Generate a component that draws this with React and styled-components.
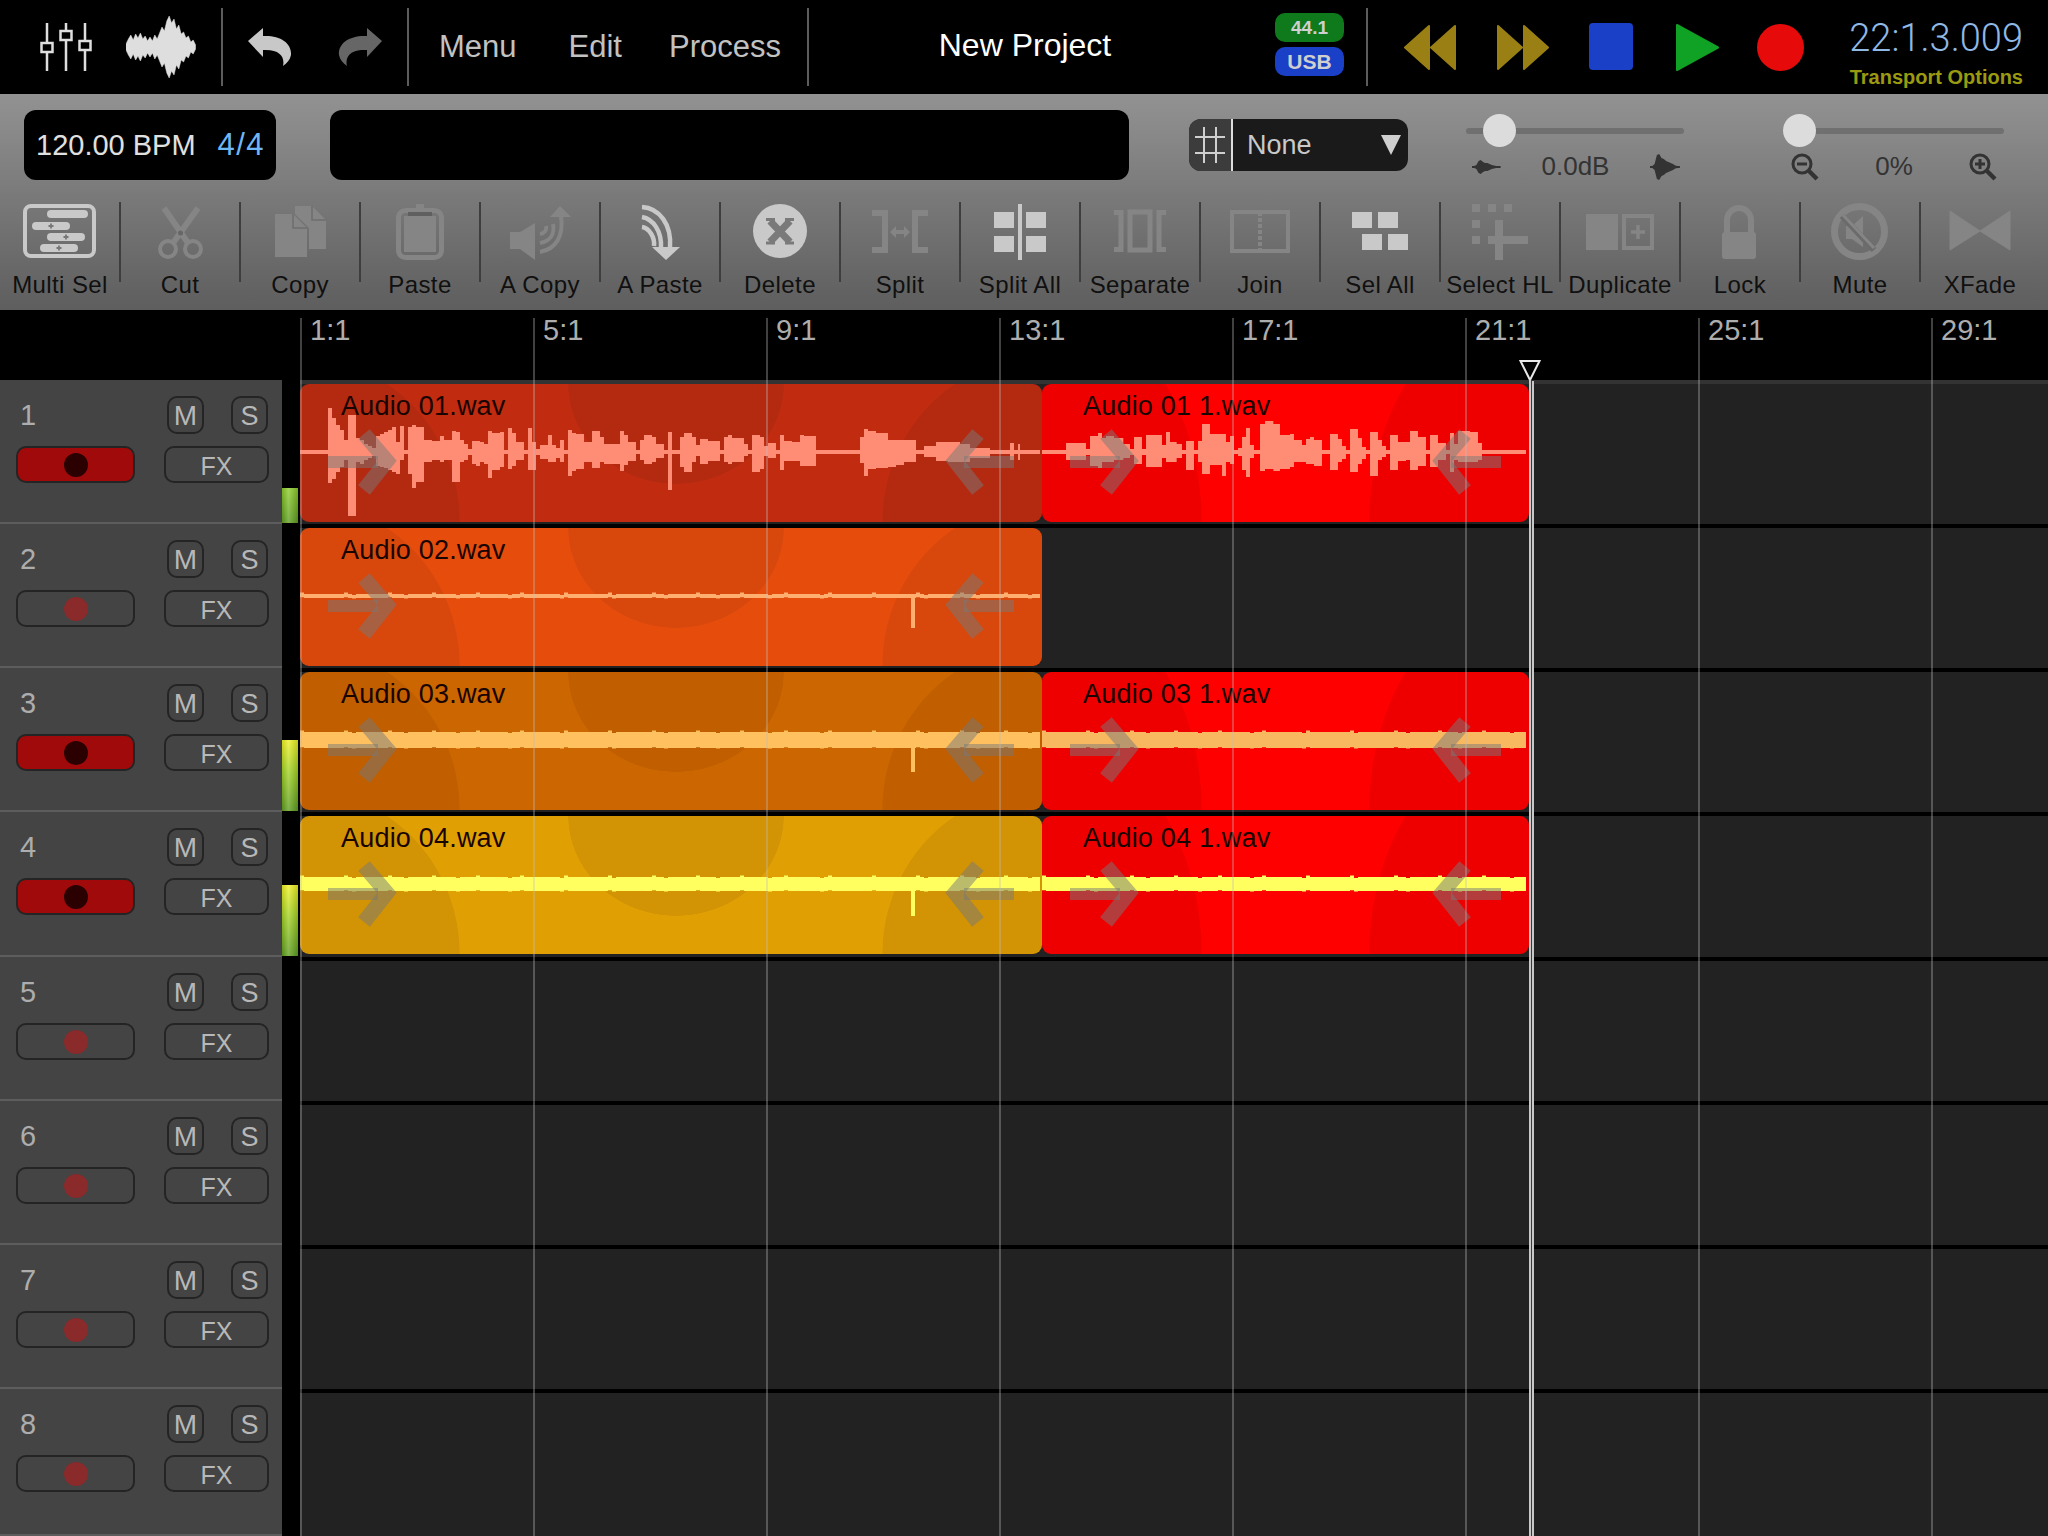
import React from 'react'
import styled, { createGlobalStyle } from 'styled-components'

const GlobalStyle = createGlobalStyle`
  html, body {
    margin: 0;
    width: 2048px;
    height: 1536px;
    overflow: hidden;
    background: #000;
    font-family: "Liberation Sans", Arial, sans-serif;
  }
`

const ON = '#c9c9c9'
const OFF = '#858585'
const BEAT = 233

const wave1 = [
  [84, 2, 2], [12, 44, 31], [12, 34, 27], [12, 27, 20], [12, 22, 15], [12, 12, 8], [24, 37, 64], [12, 14, 10], [12, 12, 12],
  [12, 8, 8], [12, 6, 6], [12, 4, 4], [12, 16, 14], [12, 18, 15], [12, 20, 16], [12, 22, 18], [12, 25, 20], [12, 10, 22],
  [12, 26, 8], [12, 2, 2], [12, 25, 22], [12, 27, 36], [24, 25, 30], [24, 12, 10], [24, 11, 8], [12, 16, 10], [24, 12, 8],
  [12, 21, 30], [12, 20, 30], [12, 12, 10], [12, 8, 8], [12, 3, 3], [12, 11, 12], [12, 11, 14], [12, 10, 10], [12, 8, 12],
  [12, 21, 26], [24, 19, 18], [12, 20, 15], [12, 2, 2], [12, 24, 17], [12, 19, 14], [24, 10, 8], [12, 2, 2], [12, 24, 18],
  [12, 10, 18], [12, 3, 3], [24, 7, 7], [12, 17, 10], [12, 7, 10], [12, 4, 6], [12, 12, 10], [12, 2, 2], [12, 22, 24],
  [12, 19, 19], [24, 18, 17], [24, 10, 10], [24, 21, 16], [12, 15, 10], [24, 8, 12], [24, 8, 12], [12, 21, 19], [12, 17, 13],
  [24, 10, 9], [12, 2, 2], [12, 12, 8], [24, 17, 12], [12, 15, 10], [24, 8, 6], [12, 2, 2], [12, 20, 38], [24, 2, 2],
  [12, 15, 15], [24, 19, 20], [12, 15, 10], [12, 7, 4], [24, 13, 12], [36, 11, 9], [12, 2, 2], [12, 15, 10], [12, 17, 12],
  [36, 14, 10], [12, 8, 4], [12, 2, 2], [24, 17, 20], [12, 15, 17], [12, 6, 4], [24, 9, 6], [12, 2, 2], [12, 17, 18],
  [24, 11, 9], [24, 10, 9], [12, 17, 14], [36, 16, 14], [132, 2, 2], [12, 15, 11], [12, 23, 24], [24, 21, 17], [36, 19, 16],
  [24, 12, 15], [24, 12, 13], [36, 12, 10], [24, 2, 2], [36, 6, 5], [36, 10, 9], [36, 10, 10], [30, 8, 10], [60, 4, 6],
  [60, 2, 2], [12, 9, 8], [12, 2, 2], [6, 8, 8], [60, 2, 2]
]

const wave2 = [
  [72, 2, 2], [12, 9, 8], [48, 9, 8], [12, 3, 3], [24, 16, 14], [12, 19, 16], [12, 14, 10], [24, 16, 10], [28, 14, 8],
  [20, 8, 6], [12, 3, 3], [24, 15, 12], [12, 3, 3], [48, 17, 15], [12, 7, 6], [12, 20, 10], [20, 10, 10], [16, 8, 6],
  [12, 2, 2], [24, 11, 18], [12, 2, 2], [12, 11, 10], [24, 28, 22], [36, 18, 13], [12, 18, 24], [12, 10, 10], [12, 16, 12],
  [12, 2, 2], [12, 4, 4], [12, 15, 18], [12, 24, 25], [12, 7, 6], [18, 2, 2], [15, 28, 19], [25, 31, 17], [20, 28, 19],
  [30, 17, 17], [12, 18, 15], [24, 12, 10], [12, 7, 10], [12, 13, 12], [12, 15, 12], [24, 12, 14], [24, 2, 2], [24, 18, 18],
  [12, 13, 10], [12, 6, 7], [12, 2, 2], [24, 23, 20], [12, 14, 12], [12, 5, 7], [12, 2, 2], [24, 20, 24], [12, 12, 8],
  [12, 6, 5], [12, 2, 2], [24, 17, 18], [24, 10, 9], [12, 10, 8], [24, 21, 18], [24, 15, 14], [12, 2, 2], [24, 17, 15],
  [24, 9, 8], [12, 2, 2], [12, 19, 20], [12, 8, 8], [36, 21, 10], [24, 20, 10], [12, 9, 8], [132, 2, 2]
]

// thin recordings: a flat band with a little jitter on its edges
const band = (width, half) => {
  const runs = []
  for (let x = 0, i = 0; x < width; x += 4, i++) {
    const bump = (i * 7) % 11 === 0 ? 1.5 : (i * 5) % 13 === 0 ? -1 : 0
    runs.push([12, half + bump, half - bump / 2])
  }
  return runs
}

const runsToPath = (runs, mid = 68) => {
  let x = 0
  let d = ''
  runs.forEach(([w, up, down]) => {
    const step = w / 3
    d += `M${x} ${mid - up}h${step}v${up + down}h${-step}z`
    x += step
  })
  return d
}

const blobPath = (heights, step, mid) => {
  const top = heights.map((h, i) => `${i * step} ${mid - h}`)
  const bottom = heights.map((h, i) => `${i * step} ${mid + h}`).reverse()
  return `M${top.join('L')}L${bottom.join('L')}Z`
}

const tracks = [
  { id: 1, armed: true, height: 144, meter: 35, tone: 'low' },
  { id: 2, height: 144 },
  { id: 3, armed: true, height: 144, meter: 71, tone: 'hot' },
  { id: 4, armed: true, height: 145, meter: 71, tone: 'hot' },
  { id: 5, height: 144 },
  { id: 6, height: 144 },
  { id: 7, height: 144 },
  { id: 8, height: 147 }
]

const palette = {
  rust: { base: '#c12b10', shade: '#b42a11', wave: '#ff8c75' },
  orange: { base: '#e64c0c', shade: '#d8480c', wave: '#ffb070' },
  amber: { base: '#cc6600', shade: '#c05e00', wave: '#ffc060' },
  gold: { base: '#e0a004', shade: '#d29404', wave: '#ffff60' },
  red: { base: '#ff0000', shade: '#ee0000', wave: '#ff8c75' }
}

const lanes = [
  { id: 1, clips: [
    { name: 'Audio 01.wav', tone: 'rust', wave: wave1 },
    { name: 'Audio 01 1.wav', tone: 'red', short: true, wave: wave2 }
  ] },
  { id: 2, clips: [
    { name: 'Audio 02.wav', tone: 'orange', wave: band(740, 2), spike: true }
  ] },
  { id: 3, clips: [
    { name: 'Audio 03.wav', tone: 'amber', wave: band(740, 8), spike: true },
    { name: 'Audio 03 1.wav', tone: 'red', short: true, wave: band(484, 8), waveColor: '#f8b860' }
  ] },
  { id: 4, clips: [
    { name: 'Audio 04.wav', tone: 'gold', wave: band(740, 7), spike: true },
    { name: 'Audio 04 1.wav', tone: 'red', short: true, wave: band(484, 7), waveColor: '#ffff60' }
  ] },
  { id: 5, clips: [] },
  { id: 6, clips: [] },
  { id: 7, clips: [] },
  { id: 8, clips: [] }
]

const tools = [
  { label: 'Multi Sel', on: true, icon: (
    <>
      <rect x='25' y='4' width='69' height='50' rx='6' fill='none' stroke='currentColor' strokeWidth='4' />
      <rect x='47' y='8' width='41' height='8' rx='4' />
      <rect x='32' y='20' width='38' height='8' rx='4' />
      <rect x='47' y='31' width='38' height='8' rx='4' />
      <rect x='40' y='42' width='38' height='8' rx='4' />
      <path d='M51 21.500v5M48.500 24h5M66 32.500v5M63.500 35h5M59 43.500v5M56.500 46h5' stroke='#777' strokeWidth='1.800' />
    </>
  ) },
  { label: 'Cut', icon: (
    <>
      <path d='M44 6l24 35M78 6L53 41' stroke='currentColor' strokeWidth='6' fill='none' />
      <circle cx='48' cy='47' r='8' fill='none' stroke='currentColor' strokeWidth='4' />
      <circle cx='73' cy='47' r='8' fill='none' stroke='currentColor' strokeWidth='4' />
      <circle cx='60.500' cy='31' r='2.500' fill='#666' />
    </>
  ) },
  { label: 'Copy', icon: (
    <>
      <path d='M35 12h18l14 14v29H35z' />
      <path d='M55 4h17l14 14v29H69V26L55 12z' />
      <path d='M53 12v14h14M72 4v14h14' fill='none' stroke='#6e6e6e' strokeWidth='1.500' />
    </>
  ) },
  { label: 'Paste', icon: (
    <>
      <rect x='38.500' y='8.500' width='43' height='47' rx='7' fill='none' stroke='currentColor' strokeWidth='5' />
      <rect x='56' y='2' width='8' height='6' />
      <rect x='48' y='10' width='24' height='4' fill='#5f5f5f' />
      <rect x='44' y='14' width='32' height='36' />
    </>
  ) },
  { label: 'A Copy', icon: (
    <>
      <path d='M30 30h10l15-9v37L40 47H30z' />
      <path d='M60 50c16-3 24-16 21-36M60 41c10-2 15-9 13-19M60 32c5-1 7-4 6-8' fill='none' stroke='currentColor' strokeWidth='4' />
      <path d='M70 15L80 4l11 11z' />
    </>
  ) },
  { label: 'A Paste', on: true, icon: (
    <>
      <path d='M42 5c17 1 30 17 28 41M42 15c11 2 20 14 19 31M42 25c7 1 13 10 12 19' fill='none' stroke='currentColor' strokeWidth='4.500' />
      <path d='M52 45h28L66 58z' />
    </>
  ) },
  { label: 'Delete', on: true, icon: (
    <>
      <circle cx='60' cy='29' r='27' />
      <path d='M50 19l20 21M70 19L50 40' stroke='#7a7a7a' strokeWidth='7' />
      <path d='M46 17.500h9M65 17.500h9M46 41h9M65 41h9' stroke='#7a7a7a' strokeWidth='3' />
    </>
  ) },
  { label: 'Split', icon: (
    <>
      <path d='M32 11h13v37H32M88 11H75v37h13' fill='none' stroke='currentColor' strokeWidth='6' />
      <path d='M50 30l6-6v4h8v-4l6 6-6 6v-4h-8v4z' />
    </>
  ) },
  { label: 'Split All', on: true, icon: (
    <>
      <rect x='58' y='2' width='4' height='56' />
      <rect x='34' y='10' width='20' height='16' />
      <rect x='34' y='34' width='20' height='16' />
      <rect x='66' y='10' width='20' height='16' />
      <rect x='66' y='34' width='20' height='16' />
    </>
  ) },
  { label: 'Separate', icon: (
    <>
      <path d='M34 10.500h7v37h-7M86 10.500h-7v37h7' fill='none' stroke='currentColor' strokeWidth='5' />
      <rect x='50' y='10' width='20' height='38' fill='none' stroke='currentColor' strokeWidth='5' />
    </>
  ) },
  { label: 'Join', icon: (
    <>
      <rect x='32' y='10' width='56' height='39' fill='none' stroke='currentColor' strokeWidth='4' />
      <path d='M60 10v39' fill='none' stroke='currentColor' strokeWidth='4' strokeDasharray='4 2' />
    </>
  ) },
  { label: 'Sel All', on: true, icon: (
    <>
      <rect x='32' y='10' width='20' height='16' />
      <rect x='58' y='10' width='20' height='16' />
      <rect x='42' y='32' width='20' height='16' />
      <rect x='68' y='32' width='20' height='16' />
    </>
  ) },
  { label: 'Select HL', icon: (
    <>
      <rect x='32' y='2' width='8' height='8' />
      <rect x='48' y='2' width='8' height='8' />
      <rect x='64' y='2' width='8' height='8' />
      <rect x='32' y='18' width='8' height='8' />
      <rect x='32' y='34' width='8' height='8' />
      <rect x='55' y='18' width='8' height='40' />
      <rect x='48' y='34' width='40' height='8' />
    </>
  ) },
  { label: 'Duplicate', icon: (
    <>
      <rect x='26' y='12' width='32' height='36' />
      <rect x='64' y='14' width='28' height='32' fill='none' stroke='currentColor' strokeWidth='4' />
      <path d='M78 23v14M71 30h14' stroke='currentColor' strokeWidth='3.500' />
    </>
  ) },
  { label: 'Lock', icon: (
    <>
      <path d='M47 32V18a12 12 0 0 1 24 0v14' fill='none' stroke='currentColor' strokeWidth='6' />
      <rect x='42' y='30' width='34' height='27' rx='3' />
    </>
  ) },
  { label: 'Mute', icon: (
    <>
      <circle cx='59.500' cy='29.500' r='25' fill='none' stroke='currentColor' strokeWidth='7' />
      <path d='M46 24h6l11-10v31L52 37h-6z' />
      <path d='M42 14l32 34' stroke='#6b6b6b' strokeWidth='6' />
      <path d='M43 13l31 33' stroke='currentColor' strokeWidth='3' />
    </>
  ) },
  { label: 'XFade', icon: (
    <path d='M30 9l30 20 30-20v39L60 29 30 48z' stroke='currentColor' strokeWidth='1' strokeLinejoin='round' />
  ) }
]

const PlainSvg = styled.svg`
  display: block;
  flex: none;
  margin-left: ${({ $left }) => $left || 0}px;
  transform: ${({ $flip }) => ($flip ? 'scaleX(-1)' : 'none')};
`

const TopBar = styled.header`
  display: flex;
  height: 94px;
  background: #000;
`

const Section = styled.div`
  display: flex;
  align-items: center;
  flex: none;
  box-sizing: border-box;
  width: ${({ $width }) => $width}px;
  height: 78px;
  margin-top: 8px;
  padding-left: ${({ $pad }) => $pad || 0}px;
  gap: ${({ $gap }) => $gap || 0}px;
  border-right: 2px solid #5c5c5c;
`

const MenuItem = styled.span`
  margin-left: ${({ $left }) => $left || 0}px;
  font-size: 31px;
  color: #c2c2c2;
`

const Title = styled.div`
  flex: none;
  width: 432px;
  height: 74px;
  margin-top: 8px;
  text-align: center;
  font-size: 32px;
  line-height: 74px;
  color: #fff;
`

const Badges = styled.div`
  display: flex;
  flex-direction: column;
  gap: 5px;
  margin-top: -6px;
`

const Badge = styled.div`
  width: 69px;
  height: 29px;
  border-radius: 10px;
  background: ${({ $color }) => $color};
  color: #cfcfcf;
  font-size: ${({ $size }) => $size}px;
  font-weight: bold;
  line-height: ${({ $line }) => $line}px;
  text-align: center;
`

const Transport = styled.div`
  display: flex;
  align-items: center;
  flex: none;
  height: 94px;
  padding-left: 36px;
`

const StopButton = styled.div`
  width: 44px;
  height: 47px;
  margin: -1px 43px 0 40px;
  border-radius: 4px;
  background: #1a40c8;
`

const RecordLamp = styled.div`
  width: 47px;
  height: 47px;
  margin-left: 38px;
  border-radius: 50%;
  background: #e60a0a;
`

const Clock = styled.div`
  display: flex;
  flex-direction: column;
  align-items: flex-end;
  width: 171px;
  margin-left: 48px;
`

const Time = styled.div`
  font-family: Roboto, "Liberation Sans", sans-serif;
  font-weight: 300;
  font-size: 38px;
  line-height: 44px;
  margin-top: 11px;
  color: #8fb8e4;
  white-space: nowrap;
`

const TransportHint = styled.div`
  font-size: 20px;
  font-weight: bold;
  line-height: 24px;
  margin-top: 5px;
  color: #9a9a10;
  white-space: nowrap;
`

const GrayPanel = styled.section`
  height: 216px;
  background: linear-gradient(#929292, #5e5e5e);
`

const InfoRow = styled.div`
  display: flex;
  height: 70px;
  padding: 16px 0 0 24px;
  align-items: center;
`

const TempoBox = styled.div`
  display: flex;
  align-items: center;
  justify-content: space-between;
  flex: none;
  box-sizing: border-box;
  width: 252px;
  height: 70px;
  padding: 0 11px 0 12px;
  border-radius: 12px;
  background: #000;
  font-size: 29px;
  color: #e0e0e0;
`

const Meter = styled.span`
  font-size: 31px;
  letter-spacing: 1.500px;
  color: #6fb6f5;
`

const Display = styled.div`
  flex: none;
  width: 799px;
  height: 70px;
  margin: 0 60px 0 54px;
  border-radius: 12px;
  background: #000;
`

const GridSelect = styled.div`
  display: flex;
  flex: none;
  width: 219px;
  height: 52px;
  border-radius: 12px;
  overflow: hidden;
  background: #1a1a1a;
`

const GridIconCell = styled.div`
  display: flex;
  align-items: center;
  justify-content: center;
  width: 42px;
  background: #3c3c3c;
  border-right: 2px solid #ddd;
`

const GridValue = styled.div`
  flex: 1;
  display: flex;
  align-items: center;
  justify-content: space-between;
  padding: 0 7px 0 14px;
  font-size: 27px;
  color: #c9c9c9;
`

const SliderBlock = styled.div`
  flex: none;
  width: ${({ $width }) => $width}px;
  margin-left: ${({ $left }) => $left}px;
  align-self: flex-start;
`

const SliderTrack = styled.div`
  position: relative;
  height: 6px;
  margin-top: 18px;
  border-radius: 3px;
  background: #707070;
`

const Knob = styled.div`
  position: absolute;
  left: ${({ $left }) => $left}px;
  top: -14px;
  width: 33px;
  height: 33px;
  border-radius: 50%;
  background: #dcdcdc;
`

const SliderScale = styled.div`
  display: flex;
  align-items: center;
  justify-content: space-between;
  margin-top: 17px;
  padding: ${({ $pad }) => $pad};
  font-size: 26px;
  color: #333;
`

const ToolBar = styled.div`
  display: flex;
  padding-top: 22px;
`

const ToolItem = styled.div`
  position: relative;
  flex: none;
  width: 120px;
  color: ${({ $on }) => ($on ? ON : OFF)};

  &:not(:last-child)::after {
    content: '';
    position: absolute;
    right: -1px;
    top: 0;
    width: 2px;
    height: 80px;
    background: #3e3e3e;
  }
`

const ToolLabel = styled.div`
  margin-top: 8px;
  text-align: center;
  font-size: 24px;
  letter-spacing: 0.400px;
  line-height: 30px;
  color: #101010;
  white-space: nowrap;
`

const Arrangement = styled.main`
  display: flex;
  height: 1226px;
  background: #000;
`

const Sidebar = styled.aside`
  flex: none;
  width: 300px;
  padding-top: 70px;
`

const TrackRow = styled.div`
  display: flex;
  height: ${({ $height }) => $height}px;
`

const Strip = styled.div`
  flex: none;
  box-sizing: border-box;
  width: 282px;
  padding: 16px 13px 0 16px;
  background: #444;
  border-bottom: 2px solid #5d5d5d;
`

const StripTop = styled.div`
  display: flex;
  align-items: center;
  height: 38px;
  padding: 0 1px 0 4px;
`

const TrackNumber = styled.span`
  flex: 1;
  font-size: 29px;
  color: #adadad;
`

const Square = styled.div`
  box-sizing: border-box;
  width: 37px;
  height: 38px;
  margin-left: ${({ $gap }) => $gap || 0}px;
  border: 2px solid #242424;
  border-radius: 10px;
  font-size: ${({ $size }) => $size}px;
  line-height: 36px;
  text-align: center;
  color: #b8b8b8;
`

const StripBottom = styled.div`
  display: flex;
  justify-content: space-between;
  margin-top: 12px;
`

const RecButton = styled.div`
  display: flex;
  align-items: center;
  justify-content: center;
  box-sizing: border-box;
  width: 119px;
  height: 37px;
  border: 2px solid #242424;
  border-radius: 10px;
  background: ${({ $armed }) => ($armed ? '#a00a0a' : 'transparent')};
`

const RecDot = styled.div`
  width: 24px;
  height: 24px;
  border-radius: 50%;
  background: ${({ $armed }) => ($armed ? '#2a0000' : '#8a2a2a')};
`

const FxButton = styled.div`
  box-sizing: border-box;
  width: 105px;
  height: 37px;
  border: 2px solid #242424;
  border-radius: 10px;
  font-size: 25px;
  line-height: 36px;
  text-align: center;
  color: #b8b8b8;
`

const MeterSlot = styled.div`
  display: flex;
  align-items: flex-end;
  flex: none;
  width: 16px;
  padding-bottom: 1px;
`

const MeterFill = styled.div`
  width: 100%;
  height: ${({ $level }) => $level}px;
  background: ${({ $tone }) => ($tone === 'hot'
    ? 'linear-gradient(to right, rgba(0,0,0,.12), rgba(255,255,255,.22) 40%, rgba(0,0,0,.16)), linear-gradient(#f0f020, #a0d020 45%, #5c9c1c)'
    : 'linear-gradient(to right, rgba(0,0,0,.12), rgba(255,255,255,.22) 40%, rgba(0,0,0,.16)), linear-gradient(#8ccc28, #5c9c1c)')};
`

const Timeline = styled.div`
  position: relative;
  flex: 1;
  min-width: 0;
  overflow: hidden;
`

const Ruler = styled.div`
  display: flex;
  height: 70px;
`

const RulerMark = styled.div`
  flex: none;
  box-sizing: border-box;
  width: ${BEAT}px;
  padding: 2px 0 0 10px;
  font-size: 29px;
  line-height: 36px;
  color: #adadad;

  &:last-child {
    width: 117px;
  }
`

const GridLines = styled.div`
  position: absolute;
  top: 8px;
  left: 0;
  right: 0;
  bottom: 0;
  display: flex;
  pointer-events: none;
`

const GridLine = styled.div`
  flex: none;
  box-sizing: border-box;
  width: ${BEAT}px;
  border-left: 2px solid rgba(190, 190, 190, 0.34);

  &:last-child {
    width: 117px;
  }
`

const Lane = styled.div`
  display: flex;
  box-sizing: border-box;
  height: ${({ $height }) => $height}px;
  background: #222;
  border-top: 4px solid ${({ $first }) => ($first ? '#333' : '#000')};
`

const Clip = styled.div`
  position: relative;
  flex: none;
  width: ${({ $short }) => ($short ? 487 : 742)}px;
  height: 138px;
  border-radius: 9px;
  overflow: hidden;
  background-color: ${({ $base }) => $base};
  background-image:
    radial-gradient(ellipse 160px ${({ $short }) => ($short ? 218 : 165)}px at 0 100%, ${({ $shade }) => $shade} 99.500%, transparent 100%),
    radial-gradient(ellipse 160px ${({ $short }) => ($short ? 218 : 165)}px at 100% 100%, ${({ $shade }) => $shade} 99.500%, transparent 100%),
    ${({ $short, $shade }) => ($short ? 'none' : `radial-gradient(ellipse 108px 100px at 376px 0, ${$shade} 99.500%, transparent 100%)`)};
`

const ClipName = styled.div`
  position: absolute;
  left: 41px;
  top: 6px;
  font-size: 27px;
  letter-spacing: 0.200px;
  line-height: 32px;
  color: #180400;
  white-space: nowrap;
`

const ClipDrawing = styled.svg`
  position: absolute;
  left: 0;
  top: 0;
  width: 100%;
  height: 100%;
`

const FadeMark = styled.svg`
  position: absolute;
  top: 0;
  left: ${({ $flip }) => ($flip ? 'auto' : '0')};
  right: ${({ $flip }) => ($flip ? '0' : 'auto')};
  transform: ${({ $flip }) => ($flip ? 'scaleX(-1)' : 'none')};
`

const Playhead = styled.div`
  position: absolute;
  top: 71px;
  bottom: 0;
  left: 1229px;
  box-sizing: border-box;
  width: 5px;
  background: #3a3a3a;
  border-left: 2px solid #c8c8c8;
  border-right: 2px solid #c8c8c8;
  pointer-events: none;
`

const PlayheadCap = styled.svg`
  position: absolute;
  top: 50px;
  left: 1219px;
`

const FadeArrow = ({ flip }) => (
  <FadeMark $flip={flip} width='100' height='138' viewBox='0 0 100 138'>
    <g fill='none' stroke='rgba(120,120,120,0.5)'>
      <path d='M28 78h50' strokeWidth='12' />
      <path d='M64 50l23 27-23 29' strokeWidth='15' />
    </g>
  </FadeMark>
)

const AudioClip = ({ name, tone, short, wave, spike, waveColor }) => {
  const colors = palette[tone]
  const color = waveColor || colors.wave
  return (
    <Clip $short={short} $base={colors.base} $shade={colors.shade}>
      <ClipDrawing viewBox={`0 0 ${short ? 487 : 742} 138`}>
        <path d={runsToPath(wave)} fill={color} />
        {spike && <rect x='611' y='68' width='4' height='32' fill={color} />}
      </ClipDrawing>
      <ClipName>{name}</ClipName>
      <FadeArrow />
      <FadeArrow flip />
    </Clip>
  )
}

const FadersIcon = () => (
  <PlainSvg width='52' height='50' viewBox='0 0 52 50' fill='none' stroke='#dedede' strokeWidth='2.500'>
    <path d='M7 1v20M7 30v19M26 1v8M26 18v31M45 1v18M45 28v21' />
    <rect x='1.500' y='21' width='11' height='9' />
    <rect x='20.500' y='9' width='11' height='9' />
    <rect x='39.500' y='19' width='11' height='9' />
  </PlainSvg>
)

const WaveIcon = () => (
  <PlainSvg width='70' height='62' viewBox='0 0 70 62'>
    <path
      d={blobPath([3, 8, 12, 7, 13, 9, 14, 8, 11, 6, 10, 6, 12, 8, 14, 20, 16, 26, 31, 24, 28, 18, 22, 13, 15, 9, 11, 5, 7, 2], 2.400, 31)}
      fill='#dedede'
      stroke='#dedede'
      strokeWidth='0.500'
    />
  </PlainSvg>
)

const HistoryIcon = ({ color, flip }) => (
  <PlainSvg $flip={flip} width='44' height='38' viewBox='0 0 44 38' fill={color}>
    <path d='M0 13L15 0v8c17-1 29 7 28 19-1 5-4 8-8 11 2-9-3-17-20-16v7z' />
  </PlainSvg>
)

const SkipIcon = ({ flip, left }) => (
  <PlainSvg
    $flip={flip}
    $left={left}
    width='53'
    height='47'
    viewBox='0 0 53 47'
    fill='#9a8014'
    stroke='#9a8014'
    strokeWidth='2'
    strokeLinejoin='round'
  >
    <path d='M1 23.500L25 2v43zM27 23.500L51 2v43z' />
  </PlainSvg>
)

const PlayIcon = () => (
  <PlainSvg width='43' height='47' viewBox='0 0 43 47' fill='#10a224' stroke='#10a224' strokeWidth='2' strokeLinejoin='round'>
    <path d='M1 1l41 22.500L1 46z' />
  </PlainSvg>
)

const HashIcon = () => (
  <PlainSvg width='30' height='36' viewBox='0 0 30 36' stroke='#cfcfcf' strokeWidth='2' fill='none'>
    <path d='M9 0v36M21 0v36M0 10h30M0 26h30' />
  </PlainSvg>
)

const LevelIcon = ({ big }) => (
  <PlainSvg
    width={big ? 31 : 29}
    height={big ? 26 : 14}
    viewBox={big ? '0 -13 31 26' : '0 -7 29 14'}
    fill='#333'
  >
    <path
      d={big
        ? blobPath([1, 1, 3, 12, 13, 9, 8, 6, 5, 4, 3, 1.500, 1, 1], 2.300, 0)
        : blobPath([1, 1, 2, 6, 7, 5, 4, 4, 3, 2, 1.500, 1, 1, 1], 2.200, 0)}
    />
  </PlainSvg>
)

const ZoomIcon = ({ plus }) => (
  <PlainSvg width='28' height='28' viewBox='0 0 28 28' fill='none' stroke='#333'>
    <circle cx='11' cy='11' r='9' strokeWidth='3' />
    <path d='M18 18l8 8' strokeWidth='4.500' />
    <path d={plus ? 'M6 11h10M11 6v10' : 'M6 11h10'} strokeWidth='3' />
  </PlainSvg>
)

export default function App () {
  return (
    <>
      <GlobalStyle />
      <TopBar>
        <Section $width={223} $pad={40} $gap={34}>
          <FadersIcon />
          <WaveIcon />
        </Section>
        <Section $width={186} $pad={25} $gap={46}>
          <HistoryIcon color='#c8c8c8' />
          <HistoryIcon color='#666' flip />
        </Section>
        <Section $width={400} $pad={30}>
          <MenuItem>Menu</MenuItem>
          <MenuItem $left={52}>Edit</MenuItem>
          <MenuItem $left={47}>Process</MenuItem>
        </Section>
        <Title>New Project</Title>
        <Section $width={127} $pad={34}>
          <Badges>
            <Badge $color='#0e7a1c' $size={19} $line={30}>44.1</Badge>
            <Badge $color='#1a40c8' $size={21} $line={29}>USB</Badge>
          </Badges>
        </Section>
        <Transport>
          <SkipIcon />
          <SkipIcon flip left={39} />
          <StopButton />
          <PlayIcon />
          <RecordLamp />
          <Clock>
            <Time>22:1.3.009</Time>
            <TransportHint>Transport Options</TransportHint>
          </Clock>
        </Transport>
      </TopBar>
      <GrayPanel>
        <InfoRow>
          <TempoBox>
            <span>120.00 BPM</span>
            <Meter>4/4</Meter>
          </TempoBox>
          <Display />
          <GridSelect>
            <GridIconCell><HashIcon /></GridIconCell>
            <GridValue>
              None
              <PlainSvg width='20' height='20' viewBox='0 0 20 20' fill='#cfcfcf'>
                <path d='M0 0h20L10 20z' />
              </PlainSvg>
            </GridValue>
          </GridSelect>
          <SliderBlock $width={218} $left={58}>
            <SliderTrack><Knob $left={17} /></SliderTrack>
            <SliderScale $pad='0 3px 0 6px'>
              <LevelIcon />
              <span>0.0dB</span>
              <LevelIcon big />
            </SliderScale>
          </SliderBlock>
          <SliderBlock $width={221} $left={99}>
            <SliderTrack><Knob $left={0} /></SliderTrack>
            <SliderScale $pad='0 7px 0 8px'>
              <ZoomIcon />
              <span>0%</span>
              <ZoomIcon plus />
            </SliderScale>
          </SliderBlock>
        </InfoRow>
        <ToolBar>
          {tools.map(({ label, on, icon }) => (
            <ToolItem key={label} $on={on}>
              <PlainSvg width='120' height='60' viewBox='0 0 120 60' fill='currentColor'>{icon}</PlainSvg>
              <ToolLabel>{label}</ToolLabel>
            </ToolItem>
          ))}
        </ToolBar>
      </GrayPanel>
      <Arrangement>
        <Sidebar>
          {tracks.map(({ id, armed, height, meter, tone }) => (
            <TrackRow key={id} $height={height}>
              <Strip>
                <StripTop>
                  <TrackNumber>{id}</TrackNumber>
                  <Square $size={28}>M</Square>
                  <Square $size={27} $gap={27}>S</Square>
                </StripTop>
                <StripBottom>
                  <RecButton $armed={armed}><RecDot $armed={armed} /></RecButton>
                  <FxButton>FX</FxButton>
                </StripBottom>
              </Strip>
              <MeterSlot>{meter && <MeterFill $level={meter} $tone={tone} />}</MeterSlot>
            </TrackRow>
          ))}
        </Sidebar>
        <Timeline>
          <Ruler>
            {['1:1', '5:1', '9:1', '13:1', '17:1', '21:1', '25:1', '29:1'].map(mark => (
              <RulerMark key={mark}>{mark}</RulerMark>
            ))}
          </Ruler>
          {lanes.map(({ id, clips }, i) => (
            <Lane key={id} $first={i === 0} $height={tracks[i].height}>
              {clips.map(clip => <AudioClip key={clip.name} {...clip} />)}
            </Lane>
          ))}
          <GridLines>
            {[0, 1, 2, 3, 4, 5, 6, 7].map(n => <GridLine key={n} />)}
          </GridLines>
          <Playhead />
          <PlayheadCap width='22' height='21' viewBox='0 0 22 21' fill='#000' stroke='#e8e8e8' strokeWidth='2'>
            <path d='M1.500 1h19L11 20z' />
          </PlayheadCap>
        </Timeline>
      </Arrangement>
    </>
  )
}
